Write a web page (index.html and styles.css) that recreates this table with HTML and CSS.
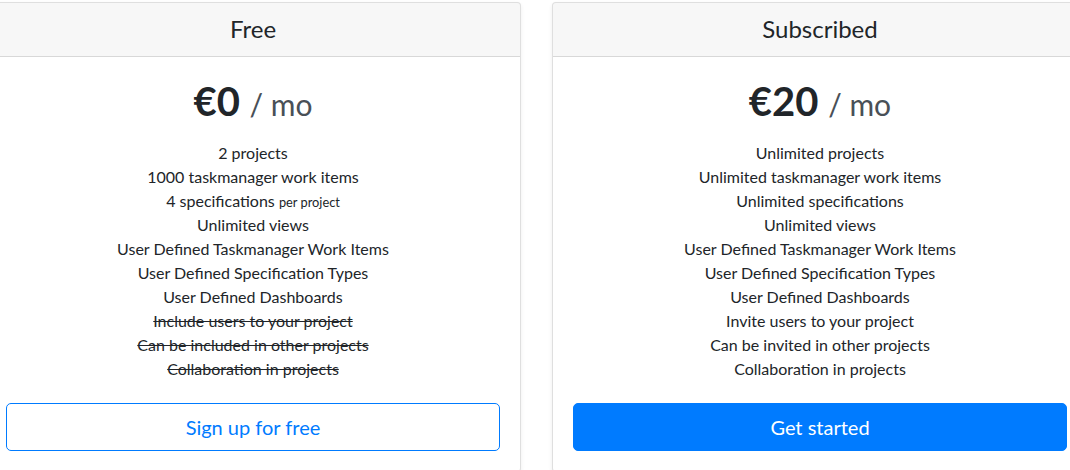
FILE: index.html
```html
<!DOCTYPE html>
<html>
<head>
<meta charset="utf-8">
<link rel="stylesheet" href="styles.css">
</head>
<body>
<div class="deck">
  <div class="card">
    <div class="card-header"><h4 class="plan">Free</h4></div>
    <div class="card-body">
      <h1 class="price">€0 <small class="muted">/ mo</small></h1>
      <ul class="features">
        <li>2 projects</li>
        <li>1000 taskmanager work items</li>
        <li>4 specifications <small>per project</small></li>
        <li>Unlimited views</li>
        <li>User Defined Taskmanager Work Items</li>
        <li>User Defined Specification Types</li>
        <li>User Defined Dashboards</li>
        <li><del>Include users to your project</del></li>
        <li><del>Can be included in other projects</del></li>
        <li><del>Collaboration in projects</del></li>
      </ul>
      <button class="btn btn-outline">Sign up for free</button>
    </div>
  </div>
  <div class="card">
    <div class="card-header"><h4 class="plan">Subscribed</h4></div>
    <div class="card-body">
      <h1 class="price">€20 <small class="muted">/ mo</small></h1>
      <ul class="features">
        <li>Unlimited projects</li>
        <li>Unlimited taskmanager work items</li>
        <li>Unlimited specifications</li>
        <li>Unlimited views</li>
        <li>User Defined Taskmanager Work Items</li>
        <li>User Defined Specification Types</li>
        <li>User Defined Dashboards</li>
        <li>Invite users to your project</li>
        <li>Can be invited in other projects</li>
        <li>Collaboration in projects</li>
      </ul>
      <button class="btn btn-primary">Get started</button>
    </div>
  </div>
</div>
</body>
</html>
```
FILE: styles.css
```css
html, body {
  margin: 0;
  padding: 0;
  background: #fff;
}
body {
  font-family: Lato, "Liberation Sans", sans-serif;
  font-size: 16px;
  line-height: 1.5;
  color: #212529;
  overflow: hidden;
}
.deck {
  display: flex;
  gap: 31px;
  margin-left: -15px;
  padding-top: 2px;
  width: 1103px;
}
.card {
  width: 536px;
  flex: none;
  box-sizing: border-box;
  border: 1px solid rgba(0,0,0,.125);
  border-radius: 4px;
  box-shadow: 0 .125rem .25rem rgba(0,0,0,.075);
  display: flex;
  flex-direction: column;
  text-align: center;
  background: #fff;
}
.card-header {
  padding: 12px 20px;
  background: rgba(0,0,0,.03);
  border-bottom: 1px solid rgba(0,0,0,.125);
  border-radius: 3px 3px 0 0;
}
.plan {
  margin: 0;
  font-size: 24px;
  font-weight: 400;
  line-height: 1.2;
}
.card-body {
  padding: 20px;
}
.price {
  margin: 0 0 8px;
  font-size: 40px;
  font-weight: 700;
  line-height: 1.2;
}
.price .muted {
  font-size: 30px;
  font-weight: 400;
  color: #495057;
}
.features {
  list-style: none;
  padding: 0;
  margin: 16px 0 22px;
}
.features small {
  font-size: 80%;
}
.btn {
  display: block;
  width: 100%;
  font-family: inherit;
  font-size: 20px;
  line-height: 1.5;
  padding: 8px 16px;
  border-radius: 5px;
  border: 1px solid #007bff;
  cursor: pointer;
}
.btn-outline {
  background: #fff;
  color: #007bff;
}
.btn-primary {
  background: #007bff;
  color: #fff;
}
```
